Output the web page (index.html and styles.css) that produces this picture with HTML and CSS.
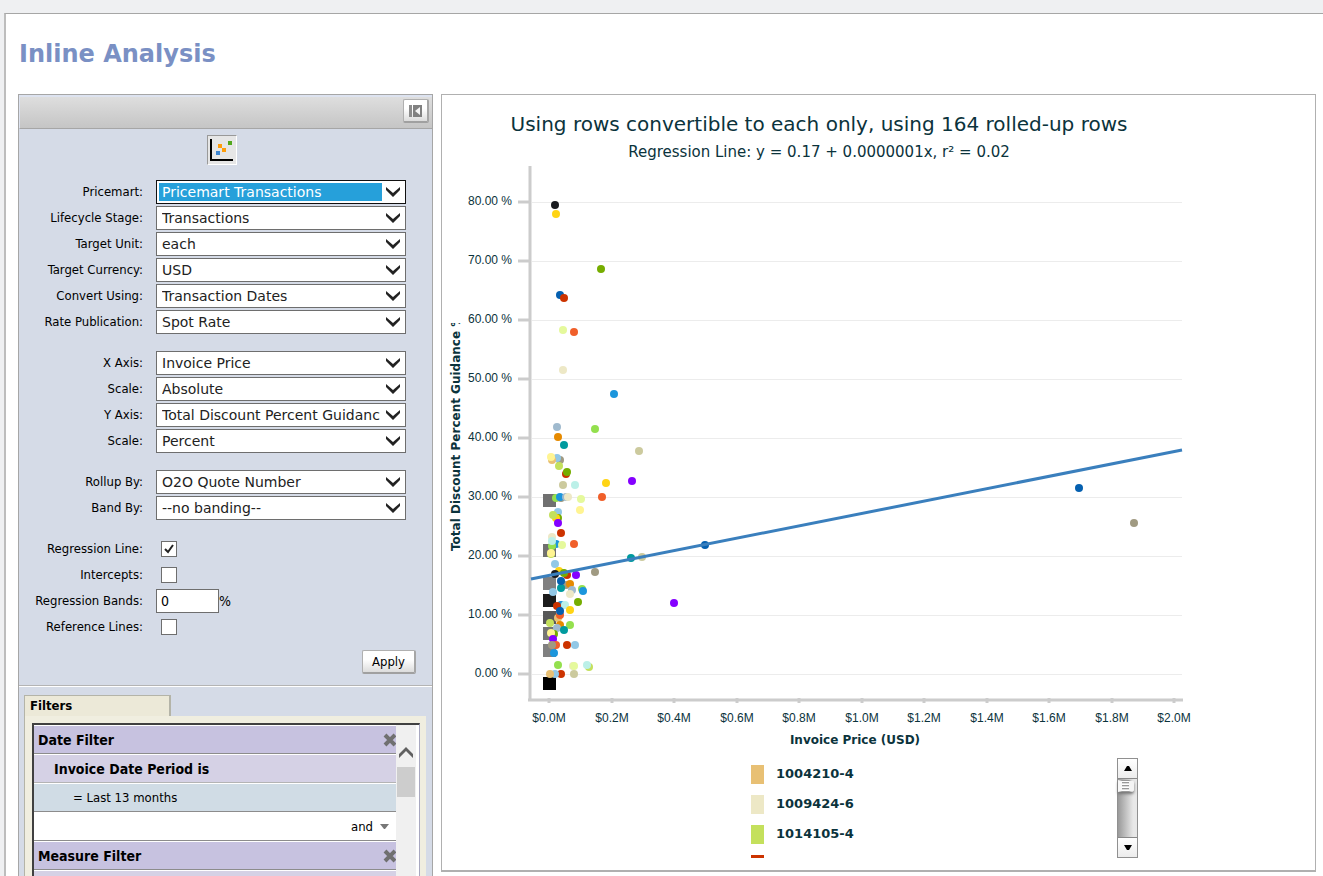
FILE: index.html
```html
<!DOCTYPE html>
<html lang="en">
<head>
    <meta charset="UTF-8">
    <meta name="viewport" content="width=device-width, initial-scale=1.0">
    <title>Inline Analysis</title>
    <link rel="stylesheet" href="styles.css">
</head>
<body>
    <main class="page">
        <h1>Inline Analysis</h1>

        <div class="workspace">
            <!-- Settings and filters -->
            <section class="side-panel">
                <div class="toolbar">
                    <button type="button" class="btn btn-collapse" aria-label="Collapse panel">
                        <svg width="14" height="12" viewBox="0 0 14 12">
                            <rect x="0" y="0" width="3" height="12" fill="#8c8c8c"/>
                            <rect x="4" y="0" width="9" height="12" fill="#808080"/>
                            <path d="M11 2v8L6 6z" fill="#f4f4f4"/>
                        </svg>
                    </button>
                </div>

                <div class="chart-types">
                    <button type="button" class="chart-type" aria-label="Scatter plot">
                        <svg width="28" height="28" viewBox="0 0 28 28">
                            <path d="M3 3v21h22" fill="none" stroke="#000" stroke-width="2"/>
                            <rect x="8" y="15" width="4" height="4" fill="#3d85d0"/>
                            <rect x="10" y="8" width="4" height="4" fill="#ff9d0a"/>
                            <rect x="14" y="12" width="4" height="4" fill="#ff9d0a"/>
                            <rect x="20" y="5" width="4" height="4" fill="#52a81e"/>
                        </svg>
                    </button>
                </div>

                <form class="settings">
                    <div class="group">
                        <label for="pricemart">Pricemart:</label>
                        <select id="pricemart" class="focused"><option>Pricemart Transactions</option></select>
                        <label for="stage">Lifecycle Stage:</label>
                        <select id="stage"><option>Transactions</option></select>
                        <label for="unit">Target Unit:</label>
                        <select id="unit"><option>each</option></select>
                        <label for="currency">Target Currency:</label>
                        <select id="currency"><option>USD</option></select>
                        <label for="convert">Convert Using:</label>
                        <select id="convert"><option>Transaction Dates</option></select>
                        <label for="rate">Rate Publication:</label>
                        <select id="rate"><option>Spot Rate</option></select>
                    </div>
                    <div class="group">
                        <label for="xAxis">X Axis:</label>
                        <select id="xAxis"><option>Invoice Price</option></select>
                        <label for="xScale">Scale:</label>
                        <select id="xScale"><option>Absolute</option></select>
                        <label for="yAxis">Y Axis:</label>
                        <select id="yAxis"><option>Total Discount Percent Guidance</option></select>
                        <label for="yScale">Scale:</label>
                        <select id="yScale"><option>Percent</option></select>
                    </div>
                    <div class="group">
                        <label for="rollup">Rollup By:</label>
                        <select id="rollup"><option>O2O Quote Number</option></select>
                        <label for="band">Band By:</label>
                        <select id="band"><option>--no banding--</option></select>
                    </div>
                    <div class="group">
                        <label for="regLine">Regression Line:</label>
                        <input type="checkbox" id="regLine" checked>
                        <label for="intercepts">Intercepts:</label>
                        <input type="checkbox" id="intercepts">
                        <label for="regBands">Regression Bands:</label>
                        <div class="percent"><input type="text" id="regBands" value="0">%</div>
                        <label for="refLines">Reference Lines:</label>
                        <input type="checkbox" id="refLines">
                    </div>
                    <div class="actions">
                        <button type="button" class="btn btn-apply">Apply</button>
                    </div>
                </form>

                <div class="filters">
                    <h2>Filters</h2>
                    <div class="filter-body">
                        <div class="filter-box">
                            <div class="filter-list">
                                <div class="row row-head">Date Filter
                                    <button type="button" class="remove" aria-label="Remove date filter">
                                        <svg width="13" height="14" viewBox="0 0 13 14"><path d="M2 2l10 10M12 2L2 12" stroke="#707070" stroke-width="4"/></svg>
                                    </button>
                                </div>
                                <div class="row row-field">Invoice Date Period is</div>
                                <div class="row row-value">= Last 13 months</div>
                                <div class="row row-join">
                                    <button type="button" class="join">and
                                        <svg width="9" height="5" viewBox="0 0 9 5"><path d="M0 0h9L5 5H4z" fill="#777"/></svg>
                                    </button>
                                </div>
                                <div class="row row-head">Measure Filter
                                    <button type="button" class="remove" aria-label="Remove measure filter">
                                        <svg width="13" height="14" viewBox="0 0 13 14"><path d="M2 2l10 10M12 2L2 12" stroke="#707070" stroke-width="4"/></svg>
                                    </button>
                                </div>
                                <div class="row row-field"></div>
                            </div>
                            <div class="scrollbar">
                                <svg width="14" height="11" viewBox="0 0 14 11"><path d="M0 11V7l7-7 7 7v4L7 4z" fill="#606060"/></svg>
                                <div class="thumb"></div>
                            </div>
                        </div>
                    </div>
                </div>
            </section>

            <!-- Chart -->
            <section class="chart-panel">
                <div class="chart">
                    <h2>Using rows convertible to each only, using 164 rolled-up rows</h2>
                    <p>Regression Line: y = 0.17 + 0.0000001x, r² = 0.02</p>
                    <svg id="plot" class="plot" viewBox="442 165 754 585">
                        <clipPath id="yTitleClip"><rect x="442" y="323" width="30" height="240"/></clipPath>
                        <g id="grid"></g>
                        <path class="axis" d="M530 166V700M528 700H1183"/>
                        <g id="points"></g>
                        <path class="regression" d="M531 579L1182 450"/>
                        <g clip-path="url(#yTitleClip)">
                            <text class="axis-title" transform="translate(460 551) rotate(-90)">Total Discount Percent Guidance %</text>
                        </g>
                        <text class="axis-title" x="855" y="744" text-anchor="middle">Invoice Price (USD)</text>
                    </svg>
                    <div class="legend">
                        <ul>
                            <li><span class="swatch sand"></span>1004210-4</li>
                            <li><span class="swatch cream"></span>1009424-6</li>
                            <li><span class="swatch lime"></span>1014105-4</li>
                            <li><span class="swatch red"></span></li>
                        </ul>
                        <div class="legend-scroll">
                            <button type="button" aria-label="Scroll up"><svg width="8" height="5" viewBox="0 0 8 5"><path d="M0 5L3 0h2l3 5z"/></svg></button>
                            <div class="track"><div class="handle"></div></div>
                            <button type="button" aria-label="Scroll down"><svg width="8" height="5" viewBox="0 0 8 5"><path d="M0 0h8L5 5H3z"/></svg></button>
                        </div>
                    </div>
                </div>
            </section>
        </div>
    </main>

    <script>
        const colors = {
            black: "#191b1f", yellow: "#ffd414", green: "#76ad00", navy: "#0560b0",
            red: "#cc3300", pale: "#e5f99c", coral: "#f05f2a", cream: "#ede8c6",
            blue: "#1c96dc", steel: "#a0bace", leaf: "#94e04e", orange: "#e68a00",
            teal: "#009a9e", olive: "#ccca9e", lemon: "#fff492", sand: "#e8c074",
            sky: "#92c8e6", taupe: "#a09a82", lime: "#c4e05c", aqua: "#bcf0e8",
            purple: "#8400ff"
        };

        const squares = [
            [500, "#707070"], [550, "#707070"], [583, "#808080"], [600, "#1c1c1c"],
            [617, "#585858"], [633, "#747474"], [650, "#808080"], [683, "#000"]
        ];

        // x, y, color
        const points = [
            [555, 205, "black"], [556, 214, "yellow"], [601, 269, "green"],
            [560, 295, "navy"], [564, 298, "red"], [563, 330, "pale"],
            [574, 332, "coral"], [563, 370, "cream"], [614, 394, "blue"],
            [557, 427, "steel"], [595, 429, "leaf"], [558, 437, "orange"],
            [564, 445, "teal"], [639, 451, "olive"], [560, 460, "taupe"],
            [557, 458, "sky"], [552, 460, "sand"], [551, 457, "lemon"],
            [559, 466, "lime"], [566, 474, "red"], [567, 472, "green"],
            [563, 485, "olive"], [575, 485, "aqua"], [606, 483, "yellow"],
            [632, 481, "purple"], [556, 498, "leaf"], [561, 498, "taupe"],
            [560, 497, "blue"], [566, 497, "steel"], [568, 497, "cream"],
            [581, 499, "pale"], [602, 497, "coral"], [580, 510, "lemon"],
            [558, 512, "sky"], [558, 518, "green"], [556, 518, "yellow"],
            [553, 515, "lime"], [558, 523, "purple"], [561, 533, "red"],
            [552, 537, "cream"], [556, 544, "blue"], [552, 546, "leaf"],
            [552, 541, "aqua"], [562, 545, "pale"], [574, 544, "coral"],
            [551, 554, "lime"], [551, 553, "lemon"], [555, 564, "sky"],
            [559, 571, "yellow"], [555, 574, "black"], [567, 575, "red"],
            [564, 573, "green"], [576, 575, "purple"], [595, 572, "taupe"],
            [642, 557, "olive"], [631, 558, "teal"], [566, 585, "taupe"],
            [561, 588, "teal"], [561, 581, "navy"], [570, 584, "orange"],
            [572, 590, "steel"], [582, 589, "leaf"], [583, 591, "blue"],
            [553, 592, "sky"], [570, 594, "cream"], [578, 602, "green"],
            [561, 605, "blue"], [557, 606, "red"], [565, 605, "aqua"],
            [558, 618, "sand"], [560, 615, "coral"], [560, 611, "navy"],
            [570, 610, "yellow"], [550, 623, "lime"], [560, 625, "orange"],
            [570, 625, "leaf"], [557, 628, "steel"], [564, 630, "teal"],
            [554, 634, "green"], [551, 633, "lemon"], [553, 639, "purple"],
            [556, 645, "coral"], [552, 645, "taupe"], [567, 645, "red"],
            [575, 645, "sky"], [554, 653, "blue"], [558, 665, "leaf"],
            [573, 666, "cream"], [574, 666, "pale"], [589, 667, "lime"],
            [587, 665, "aqua"], [561, 674, "red"], [555, 674, "sky"],
            [550, 674, "sand"], [574, 674, "olive"], [674, 603, "purple"],
            [705, 545, "navy"], [1079, 488, "navy"], [1134, 523, "taupe"]
        ];

        // Grid lines, ticks and tick labels
        function renderGrid() {
            let html = "";
            for (let i = 0; i <= 8; i++) {
                const y = 674 - i * 59;
                html += `<path class="grid-line" d="M532 ${y}H1182"/>
                    <path class="tick" d="M518 ${y}H530"/>
                    <text class="tick-label" x="512" y="${y + 3}" text-anchor="end">${(i * 10).toFixed(2)} %</text>`;
            }
            for (let i = 0; i <= 10; i++) {
                const x = Math.round(549 + i * 62.5);
                html += `<path class="tick" d="M${x} 698V703"/>
                    <text class="tick-label" x="${x}" y="722" text-anchor="middle">$${(i * 0.2).toFixed(1)}M</text>`;
            }
            document.getElementById("grid").innerHTML = html;
        }

        function renderPoints() {
            let html = "";
            squares.forEach(([y, fill]) => {
                html += `<rect x="543" y="${y - 6}" width="13" height="13" fill="${fill}"/>`;
            });
            points.forEach(([x, y, color]) => {
                html += `<circle cx="${x}" cy="${y}" r="4" fill="${colors[color]}"/>`;
            });
            document.getElementById("points").innerHTML = html;
        }

        renderGrid();
        renderPoints();
    </script>
</body>
</html>
```
FILE: styles.css
```css
* {
    box-sizing: border-box;
}
body {
    margin: 0;
    height: 100vh;
    overflow: hidden;
    padding: 13px 0 0 4px;
    background: #eff0f2;
    color: #000;
    font-family: "DejaVu Sans Condensed", "DejaVu Sans", sans-serif;
    font-size: 13px;
}
.page {
    display: flex;
    flex-direction: column;
    height: 100%;
    padding: 20px 7px 0 12px;
    background: #fff;
    border-top: 1px solid #a6a6a6;
    border-left: 2px solid #bdbdbd;
}
h1 {
    margin: 0 0 20px 1px;
    color: #7a90c4;
    font: bold 24px/40px "DejaVu Sans", sans-serif;
}
.workspace {
    display: flex;
    flex: 1;
    gap: 8px;
    min-height: 0;
}

/* Left panel */
.side-panel {
    flex: 0 0 415px;
    overflow: hidden;
    background: #d5dbe7;
    border: 1px solid #a6a6a6;
    border-bottom: 0;
}
.toolbar {
    display: flex;
    justify-content: flex-end;
    height: 34px;
    padding: 2px 3px 0 0;
    background: linear-gradient(#dedede, #c5c5c5);
    border-top: 2px solid #dde3f0;
    border-left: 1px solid #dde3f0;
    border-bottom: 1px solid #a6a6a6;
}
.btn {
    border: 1px solid #b0b0b0;
    border-right: 2px solid #a6a6a6;
    border-bottom: 2px solid #a0a0a0;
    border-radius: 2px;
    background: linear-gradient(#fff 40%, #dcdcdc);
    color: #000;
    font: inherit;
}
.btn-collapse {
    display: flex;
    align-items: center;
    justify-content: center;
    width: 26px;
    height: 24px;
    padding: 0;
}
.chart-types {
    display: flex;
    justify-content: center;
    padding: 6px 7px 15px 0;
}
.chart-type {
    width: 30px;
    height: 30px;
    padding: 0;
    border: 1px solid #999;
    border-right-color: #fff;
    border-bottom-color: #fff;
    background: #e6e6e6;
}
.chart-type svg {
    display: block;
}
.settings {
    border-bottom: 1px solid #b4b4b4;
    box-shadow: 0 1px #fff;
}
.group {
    display: grid;
    grid-template-columns: 124px 250px;
    grid-auto-rows: 24px;
    gap: 2px 13px;
    align-items: center;
    margin-bottom: 17px;
}
.group label {
    text-align: right;
    line-height: 24px;
    white-space: nowrap;
}
select {
    width: 100%;
    height: 24px;
    padding: 0 25px 0 5px;
    appearance: none;
    border: 1px solid #6e6e6e;
    border-radius: 0;
    background: #fff url("data:image/svg+xml,%3Csvg xmlns='http://www.w3.org/2000/svg' width='14' height='10'%3E%3Cpath d='M0 0l7 6 7-6v3L7 10 0 3z' fill='%23222'/%3E%3C/svg%3E") no-repeat right 5px center;
    color: #222;
    font: 14px "DejaVu Sans", sans-serif;
}
select.focused {
    border-color: #111;
    background-image: url("data:image/svg+xml,%3Csvg xmlns='http://www.w3.org/2000/svg' width='14' height='10'%3E%3Cpath d='M0 0l7 6 7-6v3L7 10 0 3z' fill='%23222'/%3E%3C/svg%3E"), linear-gradient(#26a0da, #26a0da);
    background-position: right 5px center, 2px 2px;
    background-size: auto, calc(100% - 25px) calc(100% - 4px);
    color: #fff;
}
input[type="checkbox"] {
    width: 16px;
    height: 16px;
    margin: 0 0 0 5px;
    appearance: none;
    border: 1px solid #6e6e6e;
    background: #fff;
}
input[type="checkbox"]:checked {
    background: #fff url("data:image/svg+xml,%3Csvg xmlns='http://www.w3.org/2000/svg' width='10' height='10'%3E%3Cpath d='M1 5l3 3 5-7' fill='none' stroke='%23222' stroke-width='2'/%3E%3C/svg%3E") no-repeat center;
}
.percent {
    display: flex;
    align-items: center;
    font-size: 14px;
}
.percent input {
    width: 63px;
    height: 24px;
    padding: 0 4px;
    border: 1px solid #6e6e6e;
    font: 14px "DejaVu Sans Condensed", "DejaVu Sans", sans-serif;
}
.actions {
    display: flex;
    justify-content: flex-end;
    padding: 0 16px 11px 0;
    margin-top: -6px;
}
.btn-apply {
    width: 54px;
    height: 24px;
    padding: 0;
}

/* Filters */
.filters {
    padding: 9px 6px 0 5px;
}
.filters h2 {
    width: 147px;
    height: 21px;
    margin: 0;
    padding-left: 5px;
    background: #ece9d8;
    border: 1px solid #b4b4a8;
    border-right-width: 2px;
    border-bottom: 0;
    font-size: 13px;
    line-height: 19px;
}
.filter-body {
    height: 400px;
    padding: 7px 6px 0 7px;
    background: #f0eee0;
    border-left: 1px solid #b4b4a8;
}
.filter-box {
    display: flex;
    height: 100%;
    background: #fff;
    border-top: 2px solid #404040;
    border-left: 2px solid #404040;
    border-right: 1px solid #a8a8c0;
    padding-right: 3px;
}
.filter-list {
    flex: 1;
}
.row {
    display: flex;
    align-items: center;
    justify-content: space-between;
    height: 29px;
    border-top: 1px solid #fff;
    border-bottom: 1px solid #8c8c8c;
    font-size: 14px;
    font-weight: bold;
}
.row-head {
    padding-left: 4px;
    background: #c7c2e0;
}
.row-field {
    padding-left: 20px;
    background: #d5d1e5;
    border-bottom-color: #b4b4b4;
}
.row-value {
    padding-left: 39px;
    background: #d0dce5;
    font-size: 13px;
    font-weight: normal;
}
.row-join {
    justify-content: flex-end;
    padding-right: 7px;
    font-size: 13px;
}
.remove, .join {
    display: flex;
    align-items: center;
    gap: 7px;
    padding: 0;
    border: 0;
    background: none;
    color: #000;
    font: inherit;
    font-weight: normal;
}
.scrollbar {
    display: flex;
    flex-direction: column;
    align-items: center;
    gap: 9px;
    width: 20px;
    padding-top: 22px;
    background: #f0f0f0;
}
.thumb {
    width: 18px;
    height: 30px;
    background: #cdcdcd;
}

/* Chart */
.chart-panel {
    flex: 1;
    min-width: 0;
    margin-bottom: 4px;
    padding-top: 14px;
    overflow: hidden;
    border: 1px solid #b0b0b0;
    border-bottom-width: 2px;
}
.chart {
    max-width: 754px;
    color: #0b333c;
    font-family: "DejaVu Sans", sans-serif;
}
.chart h2, .chart p {
    margin: 0;
    text-align: center;
    font-weight: normal;
}
.chart h2 {
    font-size: 20px;
    line-height: 30px;
}
.chart p {
    font-size: 15px;
    line-height: 26px;
}
.plot {
    display: block;
    width: 100%;
}
.plot text {
    fill: #0b333c;
}
.axis {
    fill: none;
    stroke: #ccc;
    stroke-width: 3;
}
.tick {
    stroke: #ccc;
    stroke-width: 3;
}
.grid-line {
    stroke: #ececec;
    stroke-width: 1;
    shape-rendering: crispEdges;
}
.tick-label {
    font: 12px "Liberation Sans", sans-serif;
}
.axis-title {
    font: bold 12px "DejaVu Sans", sans-serif;
}
.regression {
    stroke: #3a7fbd;
    stroke-width: 3;
}
.legend {
    display: flex;
    justify-content: space-between;
    height: 100px;
    margin-top: 8px;
    padding: 0 58px 0 309px;
    overflow: hidden;
}
.legend ul {
    margin: 0;
    padding: 0;
    list-style: none;
}
.legend li {
    display: flex;
    align-items: center;
    gap: 12px;
    height: 30px;
    font-size: 13px;
    font-weight: bold;
}
.swatch {
    width: 13px;
    height: 19px;
    margin-top: 2px;
}
.sand { background: #e8c074; }
.cream { background: #ede8c6; }
.lime { background: #c4e05c; }
.red { background: #cc3300; }
.legend-scroll {
    display: flex;
    flex-direction: column;
    width: 21px;
    border: 1px solid #909090;
}
.legend-scroll button {
    display: flex;
    align-items: center;
    justify-content: center;
    height: 19px;
    padding: 0;
    border: 0;
    background: linear-gradient(#fff, #ececec);
}
.track {
    flex: 1;
    padding-top: 1px;
    border-top: 1px solid #888;
    border-bottom: 1px solid #888;
    background: linear-gradient(90deg, #999, #e8e8e8 80%);
}
.handle {
    width: 16px;
    height: 12px;
    border: 1px solid #999;
    border-left: 4px solid #f8f8f8;
    border-right: 5px solid #f4f4f4;
    border-radius: 0 3px 3px 0;
    background: repeating-linear-gradient(#fff 0 1px, #999 1px 2px, #ddd 2px 3px);
    box-shadow: 0 2px 3px #777;
}
```
